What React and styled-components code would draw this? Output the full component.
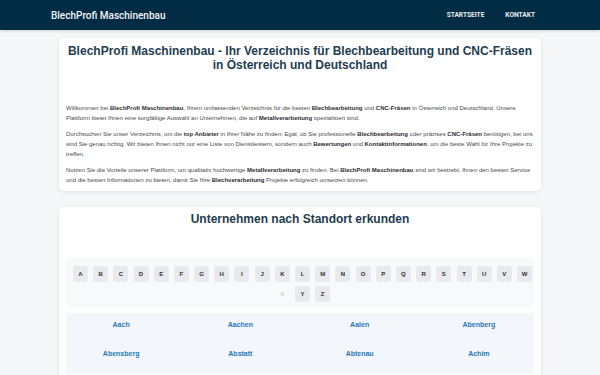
import React from "react";
import styled, { createGlobalStyle } from "styled-components";

const Global = createGlobalStyle`
  html, body { margin: 0; padding: 0; }
  body {
    background: #f4f6f8;
    font-family: "Liberation Sans", Arial, sans-serif;
    color: #444;
  }
  * { box-sizing: border-box; }
`;

const Nav = styled.header`
  height: 30px;
  background: #022b44;
  display: flex;
  align-items: center;
  justify-content: space-between;
  padding: 0 65px 0 51px;
  box-shadow: 0 1px 3px rgba(0,0,0,0.15);
`;

const Brand = styled.div`
  font-family: Roboto, "Liberation Sans", sans-serif;
  font-weight: 500;
  font-size: 10px;
  color: #f3f6f8;
`;

const Links = styled.nav`
  display: flex;
  gap: 21px;
`;

const NavLink = styled.a`
  font-family: Roboto, "Liberation Sans", sans-serif;
  font-weight: 700;
  font-size: 6.6px;
  color: #e8eef2;
  text-transform: uppercase;
  text-decoration: none;
`;

const Main = styled.main`
  width: 482px;
  margin: 8px auto 0;
  display: flex;
  flex-direction: column;
  gap: 16px;
`;

const Card = styled.section`
  background: #fff;
  border-radius: 5px;
  box-shadow: 0 1px 5px rgba(0,0,0,0.08);
  padding: ${(p) => p.$pad};
`;

const Title = styled.h1`
  margin: 0 0 31px;
  font-size: 12px;
  line-height: 14px;
  text-align: center;
  font-weight: 700;
  color: #1f3d50;
`;

const Para = styled.p`
  margin: 0 0 6px;
  font-size: 6px;
  line-height: 10px;
  color: #4a4a4a;
  &:last-child { margin-bottom: 0; }
  b { color: #2d2d2d; }
`;

const SectionTitle = styled.h2`
  margin: 0;
  font-size: 12px;
  line-height: 14px;
  text-align: center;
  font-weight: 700;
  color: #1f3d50;
`;

const LetterBar = styled.div`
  margin: 32px 7px 0;
  padding: 8px 0 6px 5px;
  background: #f8f9fa;
  display: flex;
  flex-wrap: wrap;
  justify-content: center;
  gap: 4px 5.2px;
`;

const Letter = styled.span`
  width: 15px;
  height: 16px;
  display: flex;
  align-items: center;
  justify-content: center;
  border-radius: 2px;
  font-size: 6px;
  background: ${(p) => (p.$disabled ? "transparent" : "#e8eaed")};
  color: ${(p) => (p.$disabled ? "#b5b8bb" : "#333")};
  font-weight: ${(p) => (p.$disabled ? 400 : 700)};
`;

const CityGrid = styled.div`
  margin: 5px 7px 0;
  background: #f3f7fb;
  display: grid;
  grid-template-columns: repeat(4, 1fr);
  column-gap: 9px;
  row-gap: 7px;
  padding-bottom: 10px;
`;

const City = styled.a`
  height: 22px;
  display: flex;
  align-items: center;
  justify-content: center;
  font-size: 7px;
  font-weight: 700;
  color: #2a78b8;
  text-decoration: none;
`;

const letters = "ABCDEFGHIJKLMNOPQRSTUVWXYZ".split("");
const cities = [
  "Aach", "Aachen", "Aalen", "Abenberg",
  "Abensberg", "Abstatt", "Abtenau", "Achim",
];

export default function App() {
  return (
    <>
      <Global />
      <Nav>
        <Brand>BlechProfi Maschinenbau</Brand>
        <Links>
          <NavLink href="#">Startseite</NavLink>
          <NavLink href="#">Kontakt</NavLink>
        </Links>
      </Nav>
      <Main>
        <Card $pad="6px 7px 6px">
          <Title>
            BlechProfi Maschinenbau - Ihr Verzeichnis für Blechbearbeitung und CNC-Fräsen in Österreich und Deutschland
          </Title>
          <Para>
            Willkommen bei <b>BlechProfi Maschinenbau</b>, Ihrem umfassenden Verzeichnis für die besten <b>Blechbearbeitung</b> und <b>CNC-Fräsen</b> in Österreich und Deutschland. Unsere Plattform bietet Ihnen eine sorgfältige Auswahl an Unternehmen, die auf <b>Metallverarbeitung</b> spezialisiert sind.
          </Para>
          <Para>
            Durchsuchen Sie unser Verzeichnis, um die <b>top Anbieter</b> in Ihrer Nähe zu finden. Egal, ob Sie professionelle <b>Blechbearbeitung</b> oder präzises <b>CNC-Fräsen</b> benötigen, bei uns sind Sie genau richtig. Wir bieten Ihnen nicht nur eine Liste von Dienstleistern, sondern auch <b>Bewertungen</b> und <b>Kontaktinformationen</b>, um die beste Wahl für Ihre Projekte zu treffen.
          </Para>
          <Para>
            Nutzen Sie die Vorteile unserer Plattform, um qualitativ hochwertige <b>Metallverarbeitung</b> zu finden. Bei <b>BlechProfi Maschinenbau</b> sind wir bestrebt, Ihnen den besten Service und die besten Informationen zu bieten, damit Sie Ihre <b>Blechverarbeitung</b> Projekte erfolgreich umsetzen können.
          </Para>
        </Card>
        <Card $pad="5px 0 20px">
          <SectionTitle>Unternehmen nach Standort erkunden</SectionTitle>
          <LetterBar>
            {letters.map((l) => (
              <Letter key={l} $disabled={l === "X"}>{l}</Letter>
            ))}
          </LetterBar>
          <CityGrid>
            {cities.map((c) => (
              <City key={c} href="#">{c}</City>
            ))}
          </CityGrid>
        </Card>
      </Main>
    </>
  );
}
